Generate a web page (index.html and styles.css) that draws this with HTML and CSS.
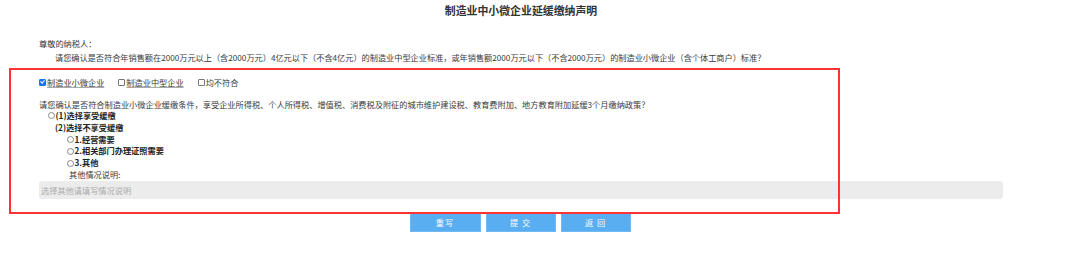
FILE: index.html
```html
<!DOCTYPE html>
<html lang="zh-CN">
<head>
<meta charset="utf-8">
<title>制造业中小微企业延缓缴纳声明</title>
<link rel="stylesheet" href="styles.css">
</head>
<body>
<div class="page">
  <h1 class="title">制造业中小微企业延缓缴纳声明</h1>
  <div class="content">
    <p class="greet">尊敬的纳税人：</p>
    <p class="intro">请您确认是否符合年销售额在2000万元以上（含2000万元）4亿元以下（不含4亿元）的制造业中型企业标准，或年销售额2000万元以下（不含2000万元）的制造业小微企业（含个体工商户）标准？</p>
    <div class="checks">
      <label class="chk"><span class="box on"></span><span class="ul">制造业小微企业</span></label>
      <label class="chk"><span class="box"></span><span class="ul">制造业中型企业</span></label>
      <label class="chk"><span class="box"></span><span>均不符合</span></label>
    </div>
    <p class="question">请您确认是否符合制造业小微企业缓缴条件，享受企业所得税、个人所得税、增值税、消费税及附征的城市维护建设税、教育费附加、地方教育附加延缓3个月缴纳政策？</p>
    <ul class="opts">
      <li class="lvl1"><span class="radio"></span><b>(1)选择享受缓缴</b></li>
      <li class="lvl1b"><b>(2)选择不享受缓缴</b></li>
      <li class="lvl2"><span class="radio"></span><b>1.经营需要</b></li>
      <li class="lvl2"><span class="radio"></span><b>2.相关部门办理证照需要</b></li>
      <li class="lvl2"><span class="radio"></span><b>3.其他</b></li>
      <li class="lvl3">其他情况说明:</li>
    </ul>
    <div class="input">选择其他请填写情况说明</div>
  </div>
  <div class="buttons">
    <button class="btn w71">重写</button>
    <button class="btn">提 交</button>
    <button class="btn">返 回</button>
  </div>
  <div class="mark"></div>
</div>
</body>
</html>
```

FILE: styles.css
```css
html, body {
  margin: 0;
  padding: 0;
  background: #fff;
}
body {
  font-family: "Noto Sans CJK SC", "Liberation Sans", sans-serif;
  color: #3a3a3a;
  font-size: 8.2px;
}
.page {
  position: relative;
  width: 1080px;
  height: 266px;
}
.title {
  margin: 4px 0 0 0;
  width: 1042px;
  text-align: center;
  font-size: 10.9px;
  line-height: 13px;
  font-weight: bold;
  color: #333;
}
.content {
  padding-left: 39px;
}
p { margin: 0; }
.greet {
  margin-top: 20px;
  line-height: 13px;
}
.intro {
  line-height: 14px;
  text-indent: 16px;
  letter-spacing: -0.02px;
}
.checks {
  margin-top: 12px;
  height: 12px;
  display: flex;
  align-items: center;
  gap: 14px;
  line-height: 12px;
}
.chk {
  display: flex;
  align-items: center;
}
.box {
  width: 5px;
  height: 5px;
  border: 1px solid #777;
  border-radius: 1px;
  margin-right: 1px;
  background: #fff;
  position: relative;
}
.box.on {
  background: #1a73e8;
  border-color: #1a73e8;
}
.box.on::after {
  content: "";
  position: absolute;
  left: 1px;
  top: -0.5px;
  width: 1.5px;
  height: 3px;
  border: solid #fff;
  border-width: 0 1px 1px 0;
  transform: rotate(40deg);
}
.ul {
  text-decoration: underline;
  text-decoration-color: #aaa;
}
.question {
  margin-top: 10px;
  line-height: 12px;
}
.opts {
  list-style: none;
  margin: 0;
  padding: 0;
}
.opts li {
  display: flex;
  align-items: center;
  height: 11.8px;
  line-height: 11.8px;
}
.opts b { font-weight: bold; color: #222; }
.radio {
  width: 5px;
  height: 5px;
  border: 1px solid #888;
  border-radius: 50%;
  margin-right: 0.5px;
}
.lvl1 { padding-left: 9px; }
.lvl1b { padding-left: 16px; }
.lvl2 { padding-left: 28px; }
.lvl3 { padding-left: 30px; }
.input {
  width: 962px;
  height: 18px;
  line-height: 18px;
  padding-left: 2px;
  background: #ececec;
  border-radius: 3px;
  color: #aaa;
}
.buttons {
  margin-top: 14px;
  width: 1040px;
  display: flex;
  justify-content: center;
  gap: 5px;
}
.btn {
  width: 70px;
  height: 19px;
  padding: 0;
  border: 1px solid #72b9f1;
  background: #58aef0;
  color: #fff;
  font-family: "Noto Sans CJK SC", "Liberation Sans", sans-serif;
  font-size: 8.2px;
  letter-spacing: 1px;
}
.btn.w71 { width: 71px; }
.mark {
  position: absolute;
  left: 9px;
  top: 64px;
  width: 827px;
  height: 142px;
  border: 2px solid #f33;
}
```
